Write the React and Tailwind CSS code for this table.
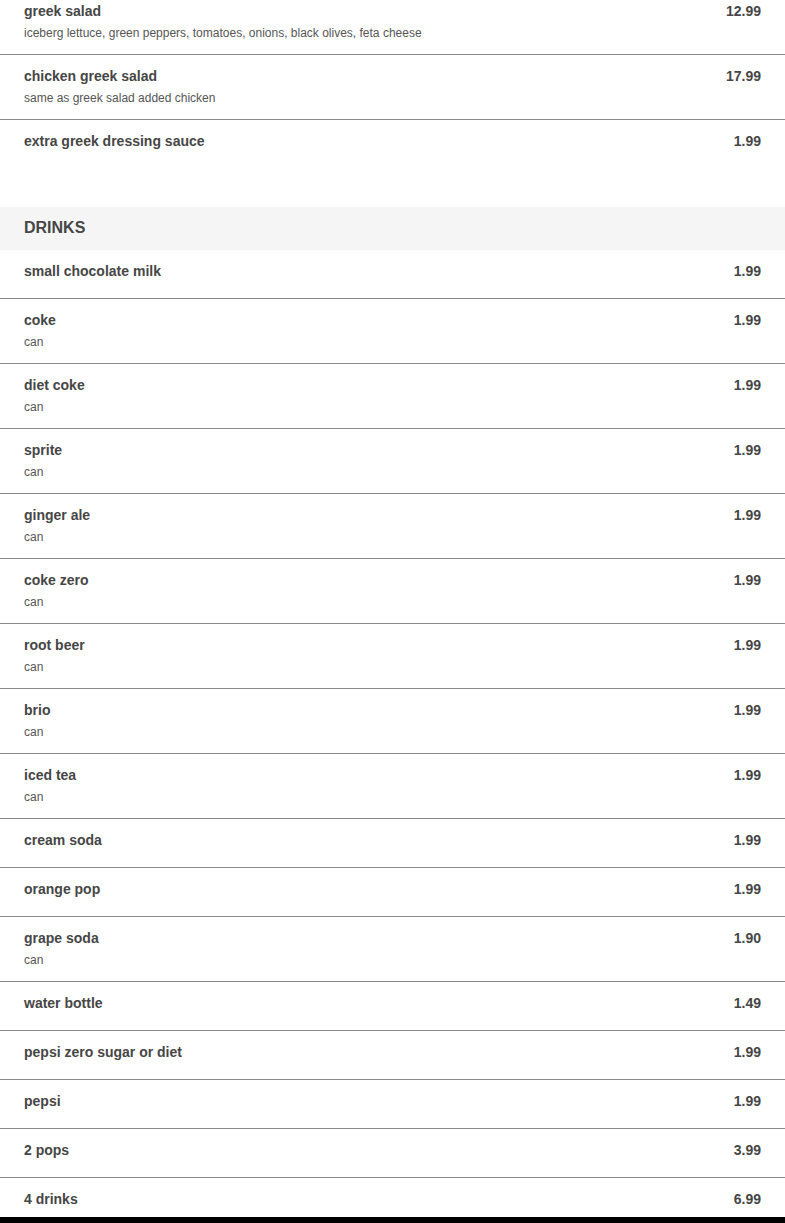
import React from "react";

const salads = [
  { name: "greek salad", desc: "iceberg lettuce, green peppers, tomatoes, onions, black olives, feta cheese", price: "12.99" },
  { name: "chicken greek salad", desc: "same as greek salad added chicken", price: "17.99" },
  { name: "extra greek dressing sauce", price: "1.99" },
];

const drinks = [
  { name: "small chocolate milk", price: "1.99" },
  { name: "coke", desc: "can", price: "1.99" },
  { name: "diet coke", desc: "can", price: "1.99" },
  { name: "sprite", desc: "can", price: "1.99" },
  { name: "ginger ale", desc: "can", price: "1.99" },
  { name: "coke zero", desc: "can", price: "1.99" },
  { name: "root beer", desc: "can", price: "1.99" },
  { name: "brio", desc: "can", price: "1.99" },
  { name: "iced tea", desc: "can", price: "1.99" },
  { name: "cream soda", price: "1.99" },
  { name: "orange pop", price: "1.99" },
  { name: "grape soda", desc: "can", price: "1.90" },
  { name: "water bottle", price: "1.49" },
  { name: "pepsi zero sugar or diet", price: "1.99" },
  { name: "pepsi", price: "1.99" },
  { name: "2 pops", price: "3.99" },
  { name: "4 drinks", price: "6.99" },
];

function Row({ item, first }) {
  return (
    <div
      className={
        "flex justify-between px-6 pt-3 " +
        (item.desc ? "pb-3 " : "pb-[18px] ") +
        (first ? "" : "border-t border-[#8a8a8a]")
      }
    >
      <div className="flex flex-col">
        <div className="text-[14px] leading-[18px] font-bold text-[#464646]">{item.name}</div>
        {item.desc && (
          <div className="mt-1 text-[12px] leading-[18px] text-[#555555]">{item.desc}</div>
        )}
      </div>
      <div className="text-[14px] leading-[18px] font-bold text-[#464646]">{item.price}</div>
    </div>
  );
}

export default function App() {
  return (
    <div className="bg-white min-h-[1223px] overflow-hidden" style={{ fontFamily: '"Liberation Sans", Arial, sans-serif' }}>
      <div className="-mt-[10px] mb-[39px]">
        {salads.map((it, i) => (
          <Row key={it.name} item={it} first={i === 0} />
        ))}
      </div>
      <div className="bg-[#f5f5f5] px-6 pt-3 pb-[13px] text-[16px] leading-[18px] font-bold text-[#464646]">DRINKS</div>
      <div>
        {drinks.map((it, i) => (
          <Row key={it.name} item={it} first={i === 0} />
        ))}
      </div>
      <div className="fixed left-0 right-0 bottom-0 h-[6px] bg-black" />
    </div>
  );
}
